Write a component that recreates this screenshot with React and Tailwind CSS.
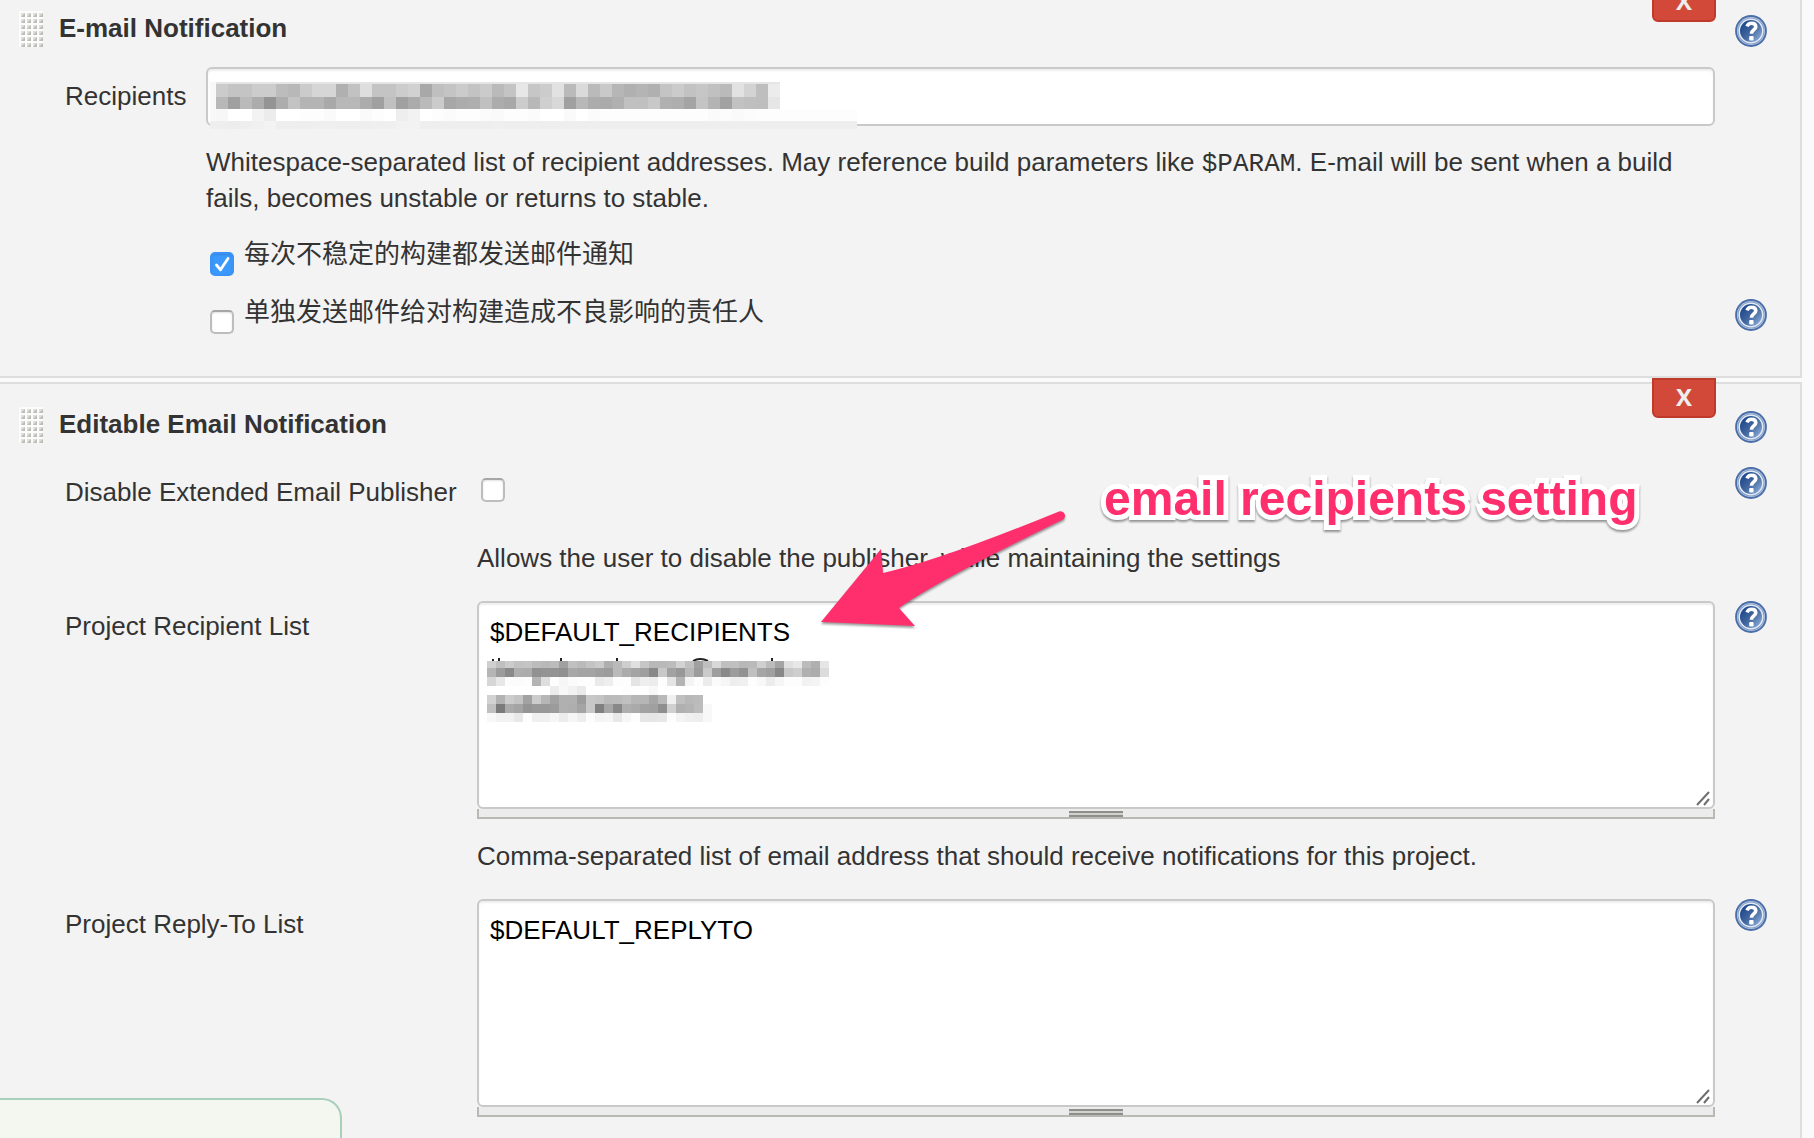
import React from "react";

const GRIP_COLS = [0, 1, 2, 3];
const GRIP_ROWS = [0, 1, 2, 3, 4, 5];

function Grip() {
  return (
    <svg className="mt-px h-9 w-6 shrink-0" viewBox="0 0 24 36" aria-hidden="true">
      <rect width="24" height="36" fill="#fcfcfc" />
      {GRIP_ROWS.map((r) =>
        GRIP_COLS.map((c) => (
          <g key={`${r}-${c}`}>
            <rect x={c * 6 + 2} y={r * 6 + 2} width="4" height="4" fill="#dededb" />
            <path d={`M${c * 6 + 6} ${r * 6 + 2}v4h-4z`} fill="#bdbdb8" />
          </g>
        ))
      )}
    </svg>
  );
}

function HelpLink({ topic }) {
  const id = `help-${topic.replace(/[^a-z]/gi, "")}`;
  return (
    <a href="#help" aria-label={`Help for ${topic}`} className="block h-8 w-8 shrink-0">
      <svg viewBox="0 0 32 32" className="h-8 w-8" aria-hidden="true">
        <defs>
          <linearGradient id={id} x1="0.1" y1="0.2" x2="0.9" y2="0.9">
            <stop offset="0" stopColor="#1f4a8c" />
            <stop offset="0.5" stopColor="#45689f" />
            <stop offset="1" stopColor="#86a9d6" />
          </linearGradient>
        </defs>
        <circle cx="16" cy="16" r="15.900" fill="#4a6ea8" />
        <circle cx="16" cy="16" r="14" fill="#b9c9e2" />
        <circle cx="16" cy="16" r="13.300" fill="#7d99c6" />
        <circle cx="16" cy="16" r="12.500" fill="#e3eaf5" />
        <circle cx="16" cy="16" r="11" fill={`url(#${id})`} />
        <path
          d="M12 11.400c0.900-2.300 2.600-3.100 4.400-3.100 2.600 0 4.400 1.300 4.400 3.500 0 3.200-4.400 3.100-4.400 6.900"
          fill="none"
          stroke="#fff"
          strokeWidth="3.600"
        />
        <rect x="14.200" y="21" width="4.400" height="4.400" rx="1" fill="#fff" />
      </svg>
    </a>
  );
}

function Section({ title, last, children }) {
  return (
    <section
      className={
        last
          ? "relative border-2 border-l-0 border-[#dedede] bg-[#f3f3f3] pt-[22px] pb-24"
          : "relative border-2 border-l-0 border-[#dedede] bg-[#f3f3f3] pt-[22px] pb-[42px]"
      }
    >
      <button
        type="button"
        aria-label={`Delete ${title}`}
        className="absolute -top-1.5 right-[84px] flex h-10 w-16 items-center justify-center rounded-b-md border-2 border-[#bf3a2b] bg-[#d24939] pb-0.5 font-['Open_Sans',sans-serif] text-[24px] leading-6 font-bold text-[#eee]"
      >
        X
      </button>
      <header className="flex items-start pr-[33px] pl-[19px]">
        <Grip />
        <h2 className="ml-4 flex-1 font-bold">{title}</h2>
        <div className="mt-[5px]">
          <HelpLink topic={title} />
        </div>
      </header>
      {children}
    </section>
  );
}

function Row({ label, htmlFor, wide, help, className, children }) {
  return (
    <div className={`flex items-start pr-[33px] pl-[65px] ${className}`}>
      <div className={wide ? "w-[412px] shrink-0" : "w-[141px] shrink-0"}>
        {label && (
          <label htmlFor={htmlFor} className={wide ? "mt-[7px] block" : "mt-[11px] block"}>
            {label}
          </label>
        )}
      </div>
      <div className="min-w-0 flex-1">{children}</div>
      <div className="ml-5 w-8 shrink-0">{help && <HelpLink topic={help} />}</div>
    </div>
  );
}

function Checkbox({ id, checked }) {
  return (
    <span className="relative block h-6 w-6 shrink-0">
      <input
        id={id}
        type="checkbox"
        defaultChecked={checked}
        className="peer block h-6 w-6 appearance-none rounded-[5px] border-2 border-[#bdbdbd] border-t-[#a6a6a6] bg-white shadow-[inset_0_1px_2px_rgba(0,0,0,0.12)] checked:border-[#3b93f8] checked:bg-[#3b99fc]"
      />
      <svg
        viewBox="0 0 24 24"
        className="pointer-events-none absolute inset-0 hidden h-6 w-6 peer-checked:block"
        aria-hidden="true"
      >
        <path
          d="M6.500 13l4 4.800L18 6.500"
          fill="none"
          stroke="#fff"
          strokeWidth="2.800"
          strokeLinecap="round"
          strokeLinejoin="round"
        />
      </svg>
    </span>
  );
}

function CheckRow({ id, label, checked, help, className }) {
  return (
    <Row help={null} className={className}>
      <div className="flex h-10 items-start">
        <div className="mt-4 ml-1">
          <Checkbox id={id} checked={checked} />
        </div>
        <label htmlFor={id} className="ml-2.5 flex-1">
          {label}
        </label>
        {help && (
          <div className="mt-[5px] -mr-[52px]">
            <HelpLink topic={help} />
          </div>
        )}
      </div>
    </Row>
  );
}

function TextArea({ id, value, children }) {
  return (
    <div>
      <div className="relative">
        <textarea
          id={id}
          defaultValue={value}
          spellCheck="false"
          className="block h-52 w-full resize-none rounded-md border-2 border-[#c9c9c9] bg-white px-[11px] py-[11px] text-black shadow-[inset_0_2px_2px_rgba(0,0,0,0.07)] outline-none"
        />
        <svg
          viewBox="0 0 16 16"
          className="pointer-events-none absolute right-1 bottom-0.5 h-4 w-4"
          aria-hidden="true"
        >
          <path d="M2 14L14 1M9 14l5-6" stroke="#6e6e6e" strokeWidth="2" fill="none" />
        </svg>
        {children}
      </div>
      <div className="flex h-2.5 items-start justify-center border-2 border-t-0 border-[#b9b9b4] bg-[#ececec]">
        <div className="mt-0.5 h-1.5 w-[54px] border-y-2 border-[#8e8e8a] bg-[#d2d2cd]" />
      </div>
    </div>
  );
}

// Each row: top edge, height and one two-digit grey level for each cell.
const ADDRESS_ROWS = [
  [0, 2, "e5 ".repeat(47)],
  [
    2, 13,
    "cb c4 c4 cc cc bc b8 cb d6 d6 b0 c2 de c4 c4 cc d1 a8 bf c4 cb c3 cb ba c4 e7 c6 cc e2 ba da ba c9 b6 b0 b4 b0 c4 cb c2 c6 c0 ba e2 d3 be ec",
  ],
  [
    15, 12,
    "b8 a0 ba ac 94 ad c3 b4 b4 a9 b8 b8 ac a0 c0 a0 ab ba cb a7 ac ae c0 ac a8 cc b8 cf d8 a0 b8 ac ab b0 c0 c0 c8 b0 ae a4 c4 b4 a2 c2 bf be e6",
  ],
  [
    27, 12,
    "f7 ff ff f3 ec ff ff fd fd fa ff ff fa fd ff ee f2 ff fd fb fd fd fb fa fd fd fb ff ff fa ff fb fd fd fd fd fd fd fd fd fd fa fc fa fc fd fd fd fd fd fd fd fd fd",
  ],
  [
    39, 8,
    "ee ed ee f0 f3 ee ee ee ef ef ee ee ee ef ef f2 f2 ee ee ee ee ee ee ef ee ee ee ee ee ee ee ee ee ee ee ee ee ee ee ee ee ee ee ee ee ee ee ee ee ee ee ee ee ee",
  ],
];

const LIST_ROWS = [
  [
    3, 7,
    "cf bf cb c2 c4 bc b8 bc a0 c0 ba c3 ca ae ba ce e0 c6 b8 b9 bc d2 c0 a0 bf d8 bf c0 b8 ba d0 bc a4 e0 e8 bc b0 e6",
  ],
  [
    10, 9,
    "b5 9c 8a ae ac 91 93 93 90 a8 a4 a4 9f 9c ba ac a4 9e 88 c8 a2 98 b8 9c ca 9e 8a 9c 92 c0 a6 a0 88 c8 ce b0 ac dc",
  ],
  [
    19, 9,
    "d6 e8 fc fb fd b4 de fd f6 fb fd fd ea ee fd fd e4 ee ec fd e4 b4 f4 fd ec fb f6 ee f0 fd f8 ec f6 fd fd f2 f4 fd",
  ],
  [28, 9, "ff ff ff ff ff ff ff ec f8 f2 ea ff ff ff ff fd fd fd f8 ff ff ff ff ff"],
  [
    37, 9,
    "d2 b2 cc c4 a2 cc b6 a2 b0 b0 9c c8 c4 ba bb c0 b6 b6 a6 b8 f0 c0 b8 bb",
  ],
  [
    46, 9,
    "c0 7a aa a4 94 98 98 9b b0 ae a4 c8 80 a6 88 ae aa a2 a0 8e d0 b0 b4 bc f8",
  ],
  [
    55, 9,
    "f8 f2 f2 e8 fd f0 f0 f6 ec f6 ee fd f4 f6 e8 f6 fd e6 e6 e8 fd f4 f0 ee f8",
  ],
];

function Mosaic({ rows, cell, x }) {
  return rows.map(([y, h, greys]) =>
    greys
      .trim()
      .split(" ")
      .map((g, i) => (
        <rect
          key={`${y}-${i}`}
          x={x + i * cell}
          y={y}
          width={cell}
          height={h}
          fill={`#${g}${g}${g}`}
          shapeRendering="crispEdges"
        />
      ))
  );
}

function Annotation() {
  return (
    <>
      <svg
        viewBox="815 500 254 136"
        className="pointer-events-none absolute top-[116px] left-[815px] h-[136px] w-[254px] drop-shadow-[0_2px_1px_rgba(0,0,0,0.4)]"
        aria-hidden="true"
      >
        <path
          d="M821 622L881 549L883 573Q938 561 1059 511.500A4.500 4.500 0 0 1 1062 520Q935 582 899 608L915 626Z"
          fill="#ff2f6e"
        />
      </svg>
      <p className="pointer-events-none absolute top-[88px] left-[1104px] text-[48px] leading-[54px] font-bold whitespace-nowrap text-[#ff2f6e] [-webkit-text-stroke:10px_white] [paint-order:stroke_fill] [stroke-linejoin:round] drop-shadow-[0_2px_1px_rgba(0,0,0,0.4)]">
        email recipients setting
      </p>
    </>
  );
}

export default function App() {
  return (
    <div className="relative h-screen overflow-hidden bg-[#fafafa] font-['Liberation_Sans','Noto_Sans_CJK_SC',sans-serif] text-[26px] leading-9 text-[#333]">
      <main className="-mt-[14px] mr-3 flex flex-col gap-1">
        <Section title="E-mail Notification">
          <Row label="Recipients" htmlFor="recipients" className="mt-5">
            <div className="relative">
              <input
                id="recipients"
                type="text"
                className="block h-[59px] w-full rounded-md border-2 border-[#c9c9c9] bg-white px-3 text-black shadow-[inset_0_2px_2px_rgba(0,0,0,0.07)] outline-none"
              />
              <svg
                viewBox="0 0 647 47"
                className="pointer-events-none absolute top-[15px] left-1 h-[47px] w-[647px]"
                aria-hidden="true"
              >
                <rect width="6" height="39" fill="#f8f8f8" />
                <rect y="39" width="6" height="8" fill="#eee" />
                <Mosaic rows={ADDRESS_ROWS} cell={12} x={6} />
              </svg>
            </div>
          </Row>
          <Row className="mt-[18px]">
            <p>
              Whitespace-separated list of recipient addresses. May reference build parameters like{" "}
              <code className="font-['Liberation_Mono',monospace] text-[26px] leading-none">
                $PARAM
              </code>
              . E-mail will be sent when a build fails, becomes unstable or returns to stable.
            </p>
          </Row>
          <CheckRow id="unstable" label="每次不稳定的构建都发送邮件通知" checked className="mt-5" />
          <CheckRow
            id="individuals"
            label="单独发送邮件给对构建造成不良影响的责任人"
            help="individuals"
            className="mt-[18px]"
          />
        </Section>

        <Section title="Editable Email Notification" last>
          <Row
            wide
            label="Disable Extended Email Publisher"
            htmlFor="disable"
            help="disable"
            className="mt-6"
          >
            <div className="mt-[11px] ml-1">
              <Checkbox id="disable" />
            </div>
          </Row>
          <Row wide className="mt-[30px]">
            <p>Allows the user to disable the publisher, while maintaining the settings</p>
          </Row>
          <Row
            wide
            label="Project Recipient List"
            htmlFor="recipient-list"
            help="recipientlist"
            className="mt-[25px]"
          >
            <TextArea id="recipient-list" value="$DEFAULT_RECIPIENTS">
              <svg
                viewBox="0 0 360 64"
                className="pointer-events-none absolute top-[57px] left-2.5 h-16 w-[360px]"
                aria-hidden="true"
              >
                <path
                  d="M5 1h2v2h-2zM11 0h2v3h-2zM73 0h2v3h-2zM129 0h2v3h-2zM284 0h2v3h-2z"
                  fill="#222"
                />
                <path d="M206 3q7-4 15 0" stroke="#222" strokeWidth="2" fill="none" />
                <Mosaic rows={LIST_ROWS} cell={9} x={0} />
              </svg>
            </TextArea>
          </Row>
          <Row wide className="mt-[19px]">
            <p>
              Comma-separated list of email address that should receive notifications for this
              project.
            </p>
          </Row>
          <Row
            wide
            label="Project Reply-To List"
            htmlFor="reply-to"
            help="replyto"
            className="mt-[25px]"
          >
            <TextArea id="reply-to" value="$DEFAULT_REPLYTO" />
          </Row>
          <Annotation />
        </Section>
      </main>
      <aside className="absolute bottom-0 left-0 h-10 w-[342px] rounded-tr-[20px] border-t-2 border-r-2 border-[#a8cfbb] bg-[#f4f7f0]" />
    </div>
  );
}
